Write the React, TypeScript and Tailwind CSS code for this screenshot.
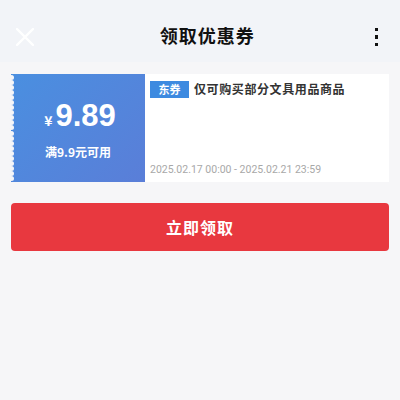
import React from "react";

const dots = Array.from({ length: 21 });

export default function App() {
  return (
    <div
      className="w-[400px] h-[400px] bg-[#f6f6f8] overflow-hidden"
      style={{ fontFamily: '"Noto Sans CJK SC", "Liberation Sans", sans-serif' }}
    >
      {/* Header */}
      <div className="h-[62px] bg-[#f2f4f8] flex items-center justify-between px-[14px]">
        <svg width="22" height="22" viewBox="0 0 22 22" className="mt-[12px]">
          <path d="M3 3 L19 19 M19 3 L3 19" stroke="#ffffff" strokeWidth="2.4" strokeLinecap="round" />
        </svg>
        <h1 className="text-[18px] font-bold text-[#111] tracking-[1px] mt-[8px] ml-[4px]">领取优惠券</h1>
        <div className="flex flex-col gap-[4px] items-center mt-[12px] mr-[8px]">
          <span className="w-[3.5px] h-[3.5px] bg-[#111]" />
          <span className="w-[3.5px] h-[3.5px] bg-[#111]" />
          <span className="w-[3.5px] h-[3.5px] bg-[#111]" />
        </div>
      </div>

      {/* Coupon */}
      <div className="mx-[11px] mt-[12px] h-[108px] flex">
        <div className="relative w-[134px] bg-[linear-gradient(135deg,#4a8fe0,#5a7ed8)] flex flex-col items-center justify-center text-white">
          <div className="absolute left-[-2.5px] top-0 bottom-0 flex flex-col justify-between py-[1px]">
            {dots.map((_, i) => (
              <span key={i} className="w-[5px] h-[5px] rounded-full bg-[#f6f6f8]" />
            ))}
          </div>
          <div className="flex items-baseline mt-[4px] ml-[4px]">
            <span className="text-[14px] font-bold mr-[3px]">¥</span>
            <span className="text-[31px] font-bold leading-none" style={{ fontFamily: '"Liberation Sans", sans-serif' }}>
              9.89
            </span>
          </div>
          <div className="text-[12px] font-bold mt-[12px]">满9.9元可用</div>
        </div>
        <div className="flex-1 bg-white pl-[5px] pr-[8px] pt-[6px] pb-[4px] flex flex-col justify-between">
          <div className="flex items-center gap-[5px]">
            <span className="bg-[#3d8ae0] text-white text-[11px] font-bold w-[39px] h-[17px] flex items-center justify-center">
              东券
            </span>
            <span className="text-[12px] font-bold text-[#333] tracking-[0.6px]">仅可购买部分文具用品商品</span>
          </div>
          <div className="text-[10.5px] text-[#a8a8a8]" style={{ fontFamily: '"Roboto", sans-serif' }}>
            2025.02.17 00:00 - 2025.02.21 23:59
          </div>
        </div>
      </div>

      {/* Button */}
      <div className="px-[11px] mt-[21px]">
        <button className="w-full h-[48px] rounded-[4px] bg-[#e8383f] text-white text-[16px] font-bold tracking-[1px] flex items-center justify-center">
          立即领取
        </button>
      </div>
    </div>
  );
}
